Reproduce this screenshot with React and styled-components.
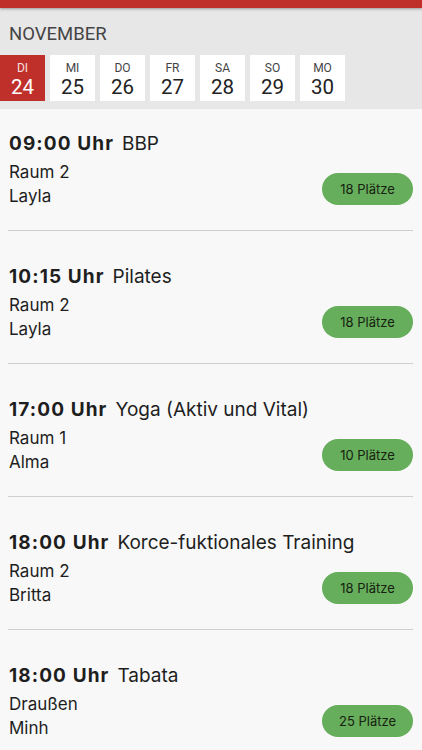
import React from "react";
import styled, { createGlobalStyle } from "styled-components";

const GlobalStyle = createGlobalStyle`
    body {
        margin: 0;
        background: #f8f8f8;
        font-family: Inter, "Noto Sans", sans-serif;
    }
`;

const days = [
    { label: "DI", num: 24, active: true },
    { label: "MI", num: 25 },
    { label: "DO", num: 26 },
    { label: "FR", num: 27 },
    { label: "SA", num: 28 },
    { label: "SO", num: 29 },
    { label: "MO", num: 30 },
];

const courses = [
    { time: "09:00 Uhr", name: "BBP", room: "Raum 2", trainer: "Layla", places: 18 },
    { time: "10:15 Uhr", name: "Pilates", room: "Raum 2", trainer: "Layla", places: 18 },
    { time: "17:00 Uhr", name: "Yoga (Aktiv und Vital)", room: "Raum 1", trainer: "Alma", places: 10 },
    { time: "18:00 Uhr", name: "Korce-fuktionales Training", room: "Raum 2", trainer: "Britta", places: 18 },
    { time: "18:00 Uhr", name: "Tabata", room: "Draußen", trainer: "Minh", places: 25 },
];

const Page = styled.div`
    width: 422px;
    height: 750px;
    overflow: hidden;
    background: #f8f8f8;
`;

const TopBar = styled.div`
    height: 8px;
    background: #c0302a;
    box-shadow: 0 1px 3px rgba(0, 0, 0, 0.35);
    position: relative;
`;

const Header = styled.div`
    background: #e7e7e7;
    padding: 15px 0 8px;
`;

const Month = styled.div`
    font-family: Roboto, sans-serif;
    font-size: 18.5px;
    color: #444;
    padding-left: 9px;
    line-height: 22px;
    margin-bottom: 10px;
`;

const Days = styled.div`
    display: flex;
    gap: 5px;
`;

const Day = styled.div`
    width: 45px;
    height: 46px;
    display: flex;
    flex-direction: column;
    align-items: center;
    font-family: Roboto, sans-serif;
    background: ${p => (p.$active ? "#c0302a" : "#fff")};
    color: ${p => (p.$active ? "#fff" : "#222")};
`;

const DayLabel = styled.span`
    font-size: 12px;
    line-height: 14px;
    margin-top: 6px;
    opacity: 0.85;
`;

const DayNum = styled.span`
    font-size: 20.5px;
    line-height: 24px;
`;

const Item = styled.div`
    margin: 0 9px 0 8px;
    padding: 34px 0 22px 1px;
    border-bottom: 1px solid #cfcfcf;
    color: #1e1e1e;
    &:first-child {
        padding-top: 23px;
    }
`;

const Title = styled.div`
    font-size: 19px;
    line-height: 24px;
    display: flex;
    gap: 8px;
`;

const Time = styled.span`
    font-weight: 700;
    letter-spacing: 1.1px;
`;

const Body = styled.div`
    display: flex;
    justify-content: space-between;
    margin-top: 4px;
`;

const Info = styled.div`
    font-size: 17px;
    line-height: 24px;
`;

const Badge = styled.div`
    align-self: flex-end;
    margin-bottom: 3px;
    width: 91px;
    height: 32px;
    border-radius: 16px;
    background: #66ad5c;
    color: #16220f;
    font-size: 13px;
    display: flex;
    align-items: center;
    justify-content: center;
`;

export default function App() {
    return (
        <Page>
            <GlobalStyle />
            <TopBar />
            <Header>
                <Month>NOVEMBER</Month>
                <Days>
                    {days.map(d => (
                        <Day key={d.num} $active={d.active}>
                            <DayLabel>{d.label}</DayLabel>
                            <DayNum>{d.num}</DayNum>
                        </Day>
                    ))}
                </Days>
            </Header>
            <div>
                {courses.map((c, i) => (
                    <Item key={i}>
                        <Title>
                            <Time>{c.time}</Time>
                            <span>{c.name}</span>
                        </Title>
                        <Body>
                            <Info>
                                <div>{c.room}</div>
                                <div>{c.trainer}</div>
                            </Info>
                            <Badge>{c.places} Plätze</Badge>
                        </Body>
                    </Item>
                ))}
            </div>
        </Page>
    );
}
